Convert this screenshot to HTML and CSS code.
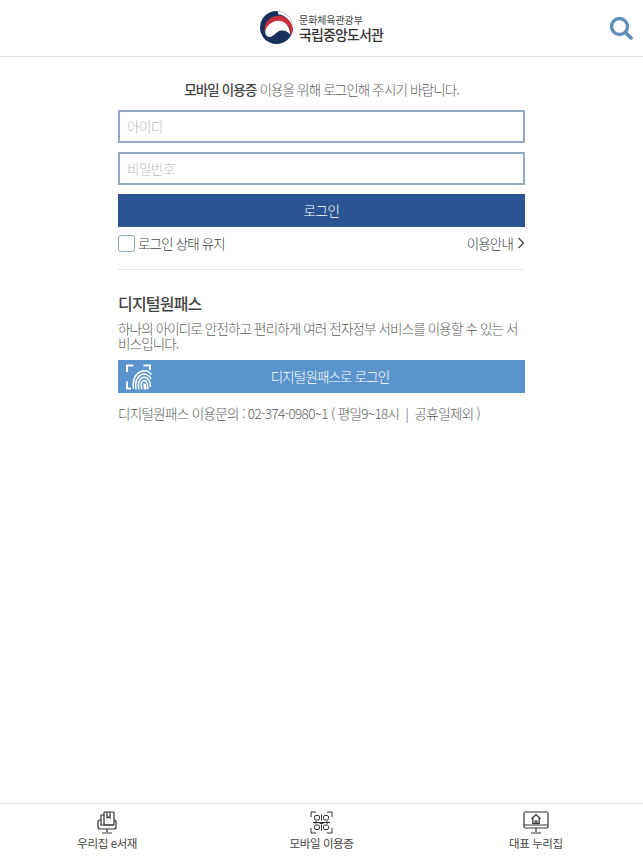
FILE: index.html
```html
<!DOCTYPE html>
<html lang="ko">
<head>
    <meta charset="UTF-8">
    <title>국립중앙도서관</title>
    <link rel="stylesheet" href="styles.css">
</head>
<body>
    <header class="top">
        <div class="logo">
            <svg class="logo-mark" width="33" height="33" viewBox="0 0 32 32">
                <circle cx="16" cy="16" r="16" fill="#17305c"/>
                <path d="M5 21 C5.5 13 11 8.5 17 8.5 C24 8.5 28.5 14 29.5 23 C27 20 24 18.5 20.5 19 C16.5 19.5 14.5 23.5 10.5 25 C7.5 25.5 5.5 24 5 21 Z" fill="#fff"/>
                <path d="M17 0 A16 16 0 0 1 32 17 L30 14 C28 8 24 4 18 3.5 Z" fill="#fff"/>
                <path d="M4.5 20 C3.5 11 10 4.5 18 4.5 C26 4.5 31.8 11 31.8 18 C31.8 20 31 22.5 30 24 C29.8 16 25 9.5 18 9.5 C12 9.5 7 13.5 4.5 20 Z" fill="#c9303e"/>
            </svg>
            <div class="logo-text">
                <span class="logo-sub">문화체육관광부</span>
                <span class="logo-main">국립중앙도서관</span>
            </div>
        </div>
        <svg class="search-icon" width="24" height="24" viewBox="0 0 24 24" fill="none" stroke="#5f8fb8">
            <circle cx="10.5" cy="10.5" r="8" stroke-width="3.4"/>
            <line x1="16.5" y1="16.5" x2="22" y2="22" stroke-width="3.6" stroke-linecap="round"/>
        </svg>
    </header>

    <main class="content">
        <p class="intro"><strong>모바일 이용증</strong> 이용을 위해 로그인해 주시기 바랍니다.</p>

        <form class="login-form">
            <input class="text-input" type="text" placeholder="아이디">
            <input class="text-input" type="password" placeholder="비밀번호">
            <button class="button-primary" type="button">로그인</button>
        </form>

        <div class="login-options">
            <label class="keep-login"><span class="check-box"></span>로그인 상태 유지</label>
            <span class="guide-link">이용안내
                <svg width="8" height="12" viewBox="0 0 8 12" fill="none" stroke="#444" stroke-width="1.3"><path d="M1.5 1 L6.5 6 L1.5 11"/></svg>
            </span>
        </div>

        <section class="onepass">
            <h2>디지털원패스</h2>
            <p class="onepass-desc">하나의 아이디로 안전하고 편리하게 여러 전자정부 서비스를 이용할 수 있는 서비스입니다.</p>
            <button class="button-onepass" type="button">
                <svg class="finger-icon" width="26" height="26" viewBox="0 0 26 26" fill="none" stroke="#fff">
                    <path d="M1 8 V1.5 H7.5 M1 17.5 V24.5 H5" stroke-width="2"/>
                    <path d="M17.5 1.5 H24 V6" stroke-width="2"/>
                    <g stroke-width="1.5">
                        <path d="M7.5 25 C6.5 18 8 10.5 15 7.5 C19 6 23 7.5 25.5 10.5"/>
                        <path d="M10 25.5 C9 19 10.5 13 15.5 10.5 C19.5 9 23.5 11.5 25 15"/>
                        <path d="M13 25.5 C11.5 20 13 15 16.5 13.5 C20 12.5 23 15 24 19 L24.5 23"/>
                        <path d="M16 25.5 C14.5 21 15.5 17.5 17.5 16.5 C19.5 16 21 18 21.5 21 L22 25"/>
                        <path d="M18.8 25.5 C18 22.5 17.8 20.5 18.5 19.5 M19 20 C19.5 22 19.8 24 20 25.5"/>
                    </g>
                </svg>
                <span>디지털원패스로 로그인</span>
            </button>
            <p class="onepass-contact">디지털원패스 이용문의 : 02-374-0980~1 ( 평일9~18시 &nbsp;|&nbsp; 공휴일제외 )</p>
        </section>
    </main>

    <nav class="bottom-nav">
        <a class="nav-item">
            <svg width="20" height="23" viewBox="0 0 20 23" fill="none" stroke="#333" stroke-width="1.2">
                <path d="M4 14 V4 H7"/>
                <rect x="7" y="1" width="10" height="13" rx="1" fill="#fff"/>
                <path d="M10 1 V7 L11.5 6 L13 7 V1"/>
                <path d="M4 9 H3 Q1 9 1 11 V16 Q1 18 3 18 H17 Q19 18 19 16 V11 Q19 9 17 9"/>
                <path d="M3.5 14 H16.5 M10 18 V21 M5 22 H15"/>
            </svg>
            <span>우리집 e서재</span>
        </a>
        <a class="nav-item">
            <svg width="23" height="23" viewBox="0 0 23 23" fill="none" stroke="#333" stroke-width="1">
                <path d="M1 6 V1 H6 M17 1 H22 V6 M1 17 V22 H6 M17 22 H22 V17"/>
                <rect x="4.5" y="4.5" width="5" height="4.5" rx="1.5"/>
                <rect x="13.5" y="4.5" width="5" height="4.5" rx="1.5"/>
                <rect x="4.5" y="14" width="5" height="4.5" rx="1.5"/>
                <rect x="13.5" y="14" width="5" height="4.5" rx="1.5"/>
                <path d="M3 11.5 H20 M11.5 3.5 V9.5 M11.5 13.5 V19.5 M6 10 V13 M9.5 12.5 H13.5 M17 10 V13"/>
            </svg>
            <span>모바일 이용증</span>
        </a>
        <a class="nav-item">
            <svg width="26" height="23" viewBox="0 0 26 23" fill="none" stroke="#333" stroke-width="1.2">
                <rect x="1" y="1" width="24" height="16" rx="1.5"/>
                <path d="M1 14 H25 M13 17 V21 M8 22 H18"/>
                <path d="M8.5 8 L13 3.5 L17.5 8 M9.8 7 V12.5 H16.2 V7"/>
                <path d="M12 12.5 V10 H14 V12.5"/>
            </svg>
            <span>대표 누리집</span>
        </a>
    </nav>
</body>
</html>
```

FILE: styles.css
```css
* {
    box-sizing: border-box;
}
body {
    margin: 0;
    height: 858px;
    overflow: hidden;
    display: flex;
    flex-direction: column;
    background-color: #fff;
    color: #555;
    font-family: "Noto Sans CJK KR", "Noto Sans", sans-serif;
    font-weight: 300;
    font-size: 13.5px;
    letter-spacing: -0.85px;
}
.top {
    position: relative;
    height: 57px;
    display: flex;
    align-items: center;
    justify-content: center;
    border-bottom: 1px solid #e2e2e2;
}
.logo {
    display: flex;
    align-items: center;
    gap: 6px;
    margin-top: -1px;
}
.logo-text {
    display: flex;
    flex-direction: column;
}
.logo-sub {
    font-size: 10px;
    line-height: 13px;
    font-weight: 400;
    letter-spacing: -0.1px;
    color: #444;
}
.logo-main {
    font-size: 14px;
    line-height: 16px;
    font-weight: 500;
    letter-spacing: -0.9px;
    color: #333;
}
.search-icon {
    position: absolute;
    top: 16px;
    right: 10px;
}
.content {
    flex: 1;
    width: 407px;
    margin: 0 auto;
}
.intro {
    margin: 22px 0 11px;
    line-height: 20px;
    text-align: center;
    color: #5c5c5c;
}
.intro strong {
    font-weight: 500;
    color: #444;
}
.login-form {
    display: flex;
    flex-direction: column;
    gap: 9px;
}
.text-input {
    height: 33px;
    padding: 0 7px 2px;
    border: 2px solid #93aac5;
    border-radius: 0;
    font-family: inherit;
    font-weight: 300;
    font-size: 13.5px;
    letter-spacing: -0.5px;
}
.text-input::placeholder {
    color: #bbb;
}
.button-primary {
    height: 33px;
    padding: 0 0 2px;
    border: none;
    background-color: #2a5494;
    color: #fff;
    font-family: inherit;
    font-weight: 300;
    font-size: 13.5px;
    letter-spacing: -0.5px;
}
.login-options {
    display: flex;
    align-items: center;
    justify-content: space-between;
    height: 43px;
    padding: 8px 0 19px;
    border-bottom: 1px solid #e2e2e2;
    color: #444;
}
.keep-login {
    display: flex;
    align-items: center;
    gap: 3px;
}
.check-box {
    width: 17px;
    height: 17px;
    margin-top: 1px;
    border: 1.5px solid #8ea3bd;
    border-radius: 3px;
}
.guide-link {
    display: flex;
    align-items: center;
    gap: 4px;
}
.onepass h2 {
    margin: 21px 0 6px;
    font-size: 16px;
    line-height: 24px;
    font-weight: 500;
    letter-spacing: -0.8px;
    color: #444;
}
.onepass-desc {
    margin: 0 0 9px;
    line-height: 15px;
    word-break: break-all;
    color: #5c5c5c;
}
.button-onepass {
    position: relative;
    display: flex;
    align-items: center;
    justify-content: center;
    width: 100%;
    height: 33px;
    padding: 0 0 2px 17px;
    border: none;
    background-color: #5a94cc;
    color: #fff;
    font-family: inherit;
    font-weight: 300;
    font-size: 13.5px;
    letter-spacing: -0.85px;
}
.finger-icon {
    position: absolute;
    left: 8px;
    top: 4px;
}
.onepass-contact {
    margin: 10px 0 0;
    line-height: 20px;
    letter-spacing: -0.65px;
    color: #5c5c5c;
}
.bottom-nav {
    height: 55px;
    display: grid;
    grid-template-columns: repeat(3, 1fr);
    border-top: 1px solid #e2e2e2;
}
.nav-item {
    display: flex;
    flex-direction: column;
    align-items: center;
    padding-top: 7px;
    font-size: 11.5px;
    line-height: 18px;
    font-weight: 400;
    letter-spacing: -0.4px;
    color: #444;
}
```
